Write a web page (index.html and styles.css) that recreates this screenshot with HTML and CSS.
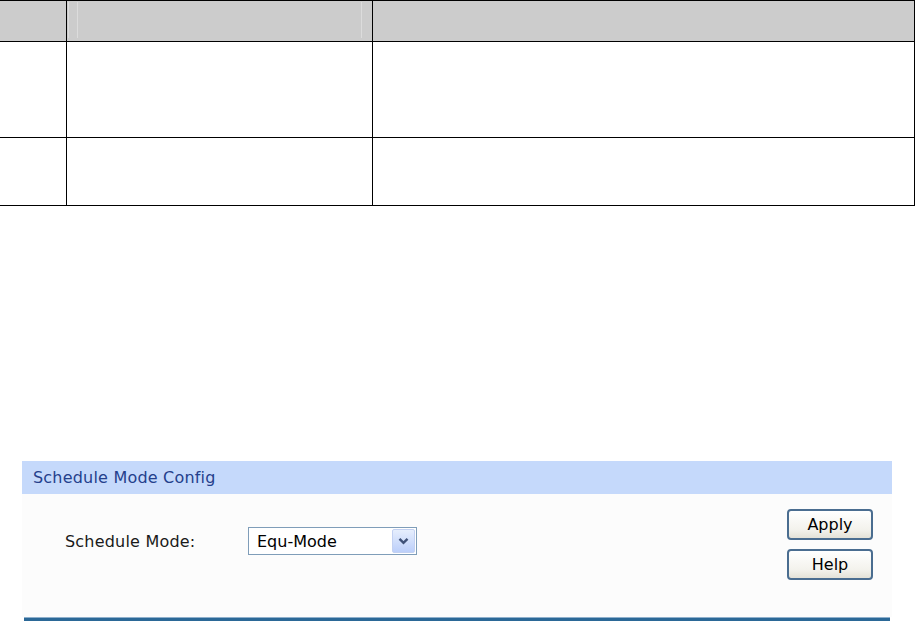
FILE: index.html
```html
<!DOCTYPE html>
<html lang="en">

<head>
  <meta charset="UTF-8">
  <meta name="viewport" content="width=device-width, initial-scale=1.0">
  <title>Schedule Mode Config</title>
  <link rel="stylesheet" href="styles.css">
</head>

<body>
  <table class="grid">
    <tr class="head">
      <th class="c1"></th>
      <th class="c2"></th>
      <th class="c3"></th>
    </tr>
    <tr class="row1">
      <td></td>
      <td></td>
      <td></td>
    </tr>
    <tr class="row2">
      <td></td>
      <td></td>
      <td></td>
    </tr>
  </table>

  <div class="panel">
    <div class="panel-title">Schedule Mode Config</div>
    <div class="panel-body">
      <div class="field">
        <span class="label">Schedule Mode:</span>
        <div class="select">
          <span class="select-text">Equ-Mode</span>
          <span class="select-arrow">
            <svg width="11" height="8" viewBox="0 0 11 8">
              <path d="M1.5 1.8 L5.5 5.8 L9.5 1.8" fill="none" stroke="#3f5178" stroke-width="2.4" />
            </svg>
          </span>
        </div>
      </div>
      <div class="buttons">
        <button type="button" class="btn">Apply</button>
        <button type="button" class="btn">Help</button>
      </div>
    </div>
    <div class="panel-foot"></div>
  </div>
</body>

</html>
```

FILE: styles.css
```css
* {
  margin: 0;
  padding: 0;
  box-sizing: border-box;
}

body {
  background: #fff;
  font-family: "DejaVu Sans", Verdana, sans-serif;
  width: 915px;
  height: 621px;
  overflow: hidden;
}

/* top table */
.grid {
  width: 915px;
  border-collapse: collapse;
  table-layout: fixed;
}

.grid th,
.grid td {
  border: 1px solid #000;
  padding: 0;
}

.grid tr > :first-child {
  border-left: none;
}

.grid .c1 {
  width: 66px;
}

.grid .c2 {
  width: 306px;
}

.head th {
  height: 41px;
  background-color: #cccccc;
}

.head .c2 {
  background-image: linear-gradient(to right,
      transparent 1px, #dcdcdc 1px, #dcdcdc 2px, transparent 2px,
      transparent 10px, #dcdcdc 10px, #dcdcdc 11px, transparent 11px,
      transparent 294px, #dcdcdc 294px, #dcdcdc 295px, transparent 295px);
  background-size: 100% 36px;
  background-position: 0 1px;
  background-repeat: no-repeat;
}

.row1 td {
  height: 96px;
}

.row2 td {
  height: 68px;
}

/* config panel */
.panel {
  width: 870px;
  margin: 255px 0 0 22px;
}

.panel-title {
  height: 33px;
  line-height: 33px;
  background-color: #c5d9fb;
  color: #24408c;
  font-size: 16px;
  letter-spacing: 0.2px;
  padding-left: 11px;
}

.panel-body {
  height: 123px;
  background-color: #fcfcfc;
  display: flex;
  justify-content: space-between;
  align-items: flex-start;
  padding: 15px 19px 0 43px;
}

.field {
  display: flex;
  align-items: center;
  margin-top: 18px;
}

.label {
  width: 183px;
  font-size: 16px;
  letter-spacing: 0.2px;
  color: #1a1a1a;
}

.select {
  width: 169px;
  height: 28px;
  border: 1px solid #7f9db9;
  background: #fff;
  display: flex;
  align-items: center;
  justify-content: space-between;
  padding: 0 1px 0 8px;
}

.select-text {
  font-size: 16px;
  color: #000;
}

.select-arrow {
  width: 23px;
  height: 24px;
  border: 1px solid #c3d1f2;
  border-radius: 2px;
  background: linear-gradient(#e6eefd, #bccffa);
  display: flex;
  align-items: center;
  justify-content: center;
}

.buttons {
  display: flex;
  flex-direction: column;
  gap: 9px;
}

.btn {
  width: 86px;
  height: 31px;
  border: 2px solid #4a6d90;
  border-radius: 4px;
  background: linear-gradient(#ffffff, #f3f2ec 70%, #e4e2d8);
  font-family: "DejaVu Sans", Verdana, sans-serif;
  font-size: 16px;
  color: #000;
  cursor: pointer;
}

.panel-foot {
  height: 4px;
  margin: 0 2px;
  background-color: #2b6897;
  border-top: 1px solid #8fb0cc;
}
```
